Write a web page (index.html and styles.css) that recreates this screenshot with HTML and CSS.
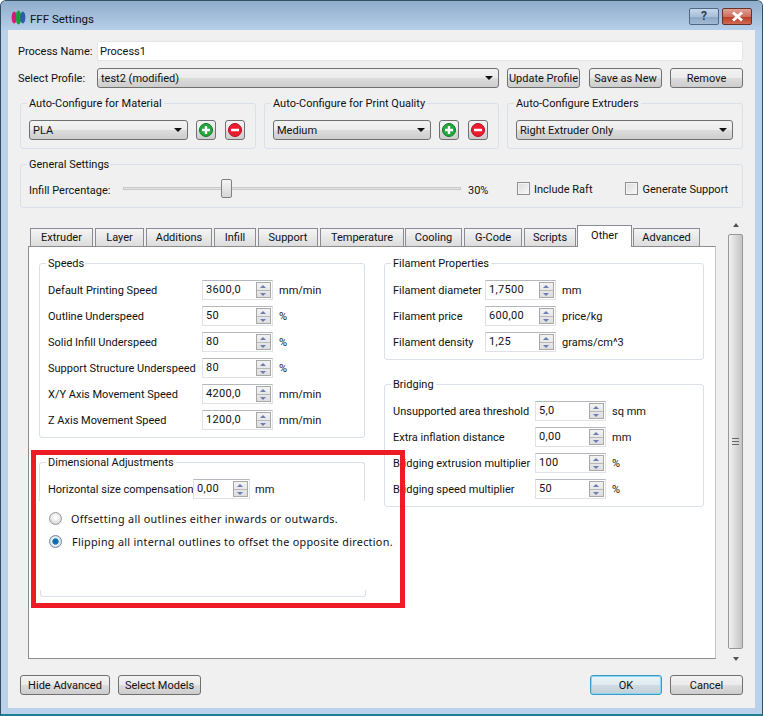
FILE: index.html
```html
<!DOCTYPE html>
<html lang="en">
<head>
  <meta charset="UTF-8" />
  <title>FFF Settings</title>
  <link rel="stylesheet" href="styles.css">
</head>
<body>
  <div class="window">
    <div class="titlebar">
      <svg class="app-icon" width="15" height="15" viewBox="0 0 15 15">
        <ellipse cx="3.2" cy="7.5" rx="2.6" ry="6" fill="#d81b78"/>
        <ellipse cx="7.5" cy="7.5" rx="2.8" ry="7" fill="#1f9a3c"/>
        <ellipse cx="11.8" cy="7.5" rx="2.6" ry="6" fill="#2a5fa8"/>
      </svg>
      <span class="title">FFF Settings</span>
      <div class="title-btn help">?</div>
      <div class="title-btn close">
        <svg width="13" height="11" viewBox="0 0 13 11"><path d="M2 1.5 L11 9.5 M11 1.5 L2 9.5" stroke="#fff" stroke-width="3" fill="none"/></svg>
      </div>
    </div>

    <div class="panel">
      <div class="row">
        <label class="row-label">Process Name:</label>
        <div class="textbox">Process1</div>
      </div>
      <div class="row row-profile">
        <label class="row-label">Select Profile:</label>
        <div class="combo combo-profile">test2 (modified)<i class="arrow"></i></div>
        <button class="btn btn-update">Update Profile</button>
        <button class="btn btn-save">Save as New</button>
        <button class="btn btn-remove">Remove</button>
      </div>

      <div class="auto-groups">
        <fieldset class="group">
          <legend>Auto-Configure for Material</legend>
          <div class="auto-row">
            <div class="combo combo-grow">PLA<i class="arrow"></i></div>
            <button class="btn icon-btn"><svg width="16" height="16" viewBox="0 0 16 16"><circle cx="8" cy="8" r="6.5" fill="#22a83c" stroke="#137a28"/><path d="M8 4 V12 M4 8 H12" stroke="#fff" stroke-width="2.4"/></svg></button>
            <button class="btn icon-btn"><svg width="16" height="16" viewBox="0 0 16 16"><circle cx="8" cy="8" r="6.5" fill="#ec1c2e" stroke="#b01020"/><path d="M4 8 H12" stroke="#fff" stroke-width="2.6"/></svg></button>
          </div>
        </fieldset>
        <fieldset class="group">
          <legend>Auto-Configure for Print Quality</legend>
          <div class="auto-row">
            <div class="combo combo-grow">Medium<i class="arrow"></i></div>
            <button class="btn icon-btn"><svg width="16" height="16" viewBox="0 0 16 16"><circle cx="8" cy="8" r="6.5" fill="#22a83c" stroke="#137a28"/><path d="M8 4 V12 M4 8 H12" stroke="#fff" stroke-width="2.4"/></svg></button>
            <button class="btn icon-btn"><svg width="16" height="16" viewBox="0 0 16 16"><circle cx="8" cy="8" r="6.5" fill="#ec1c2e" stroke="#b01020"/><path d="M4 8 H12" stroke="#fff" stroke-width="2.6"/></svg></button>
          </div>
        </fieldset>
        <fieldset class="group">
          <legend>Auto-Configure Extruders</legend>
          <div class="auto-row auto-row-wide">
            <div class="combo combo-grow">Right Extruder Only<i class="arrow"></i></div>
          </div>
        </fieldset>
      </div>

      <fieldset class="group general">
        <legend>General Settings</legend>
        <div class="general-row">
          <span class="infill-label">Infill Percentage:</span>
          <div class="slider"><div class="slider-handle"></div></div>
          <span class="infill-value">30%</span>
          <span class="check check-raft"></span><span class="check-text">Include Raft</span>
          <span class="check check-support"></span><span class="check-text">Generate Support</span>
        </div>
      </fieldset>

      <div class="tab-area">
        <div class="tab-widget">
          <div class="tabs">
            <div class="tab t-extruder">Extruder</div>
            <div class="tab t-layer">Layer</div>
            <div class="tab t-additions">Additions</div>
            <div class="tab t-infill">Infill</div>
            <div class="tab t-support">Support</div>
            <div class="tab t-temperature">Temperature</div>
            <div class="tab t-cooling">Cooling</div>
            <div class="tab t-gcode">G-Code</div>
            <div class="tab t-scripts">Scripts</div>
            <div class="tab tab-active t-other">Other</div>
            <div class="tab t-advanced">Advanced</div>
          </div>
          <div class="pane">
            <div class="col col-left">
              <fieldset class="group tab-group speeds">
                <legend>Speeds</legend>
                <div class="field"><span>Default Printing Speed</span><div class="spin">3600,0<b class="spin-btns"><i></i><i></i></b></div><span>mm/min</span></div>
                <div class="field"><span>Outline Underspeed</span><div class="spin">50<b class="spin-btns"><i></i><i></i></b></div><span>%</span></div>
                <div class="field"><span>Solid Infill Underspeed</span><div class="spin">80<b class="spin-btns"><i></i><i></i></b></div><span>%</span></div>
                <div class="field"><span>Support Structure Underspeed</span><div class="spin">80<b class="spin-btns"><i></i><i></i></b></div><span>%</span></div>
                <div class="field"><span>X/Y Axis Movement Speed</span><div class="spin">4200,0<b class="spin-btns"><i></i><i></i></b></div><span>mm/min</span></div>
                <div class="field"><span>Z Axis Movement Speed</span><div class="spin">1200,0<b class="spin-btns"><i></i><i></i></b></div><span>mm/min</span></div>
              </fieldset>
              <fieldset class="group tab-group dimensional">
                <legend>Dimensional Adjustments</legend>
                <div class="field"><span>Horizontal size compensation</span><div class="spin">0,00<b class="spin-btns"><i></i><i></i></b></div><span>mm</span></div>
              </fieldset>
              <div class="radio-row radio-first"><span class="radio"></span><span class="radio-text offset-text">Offsetting all outlines either inwards or outwards.</span></div>
              <div class="radio-row"><span class="radio radio-on"></span><span class="radio-text flip-text">Flipping all internal outlines to offset the opposite direction.</span></div>
              <div class="group-bottom"></div>
            </div>
            <div class="col col-right">
              <fieldset class="group tab-group filament">
                <legend>Filament Properties</legend>
                <div class="field"><span>Filament diameter</span><div class="spin">1,7500<b class="spin-btns"><i></i><i></i></b></div><span>mm</span></div>
                <div class="field"><span>Filament price</span><div class="spin">600,00<b class="spin-btns"><i></i><i></i></b></div><span>price/kg</span></div>
                <div class="field"><span>Filament density</span><div class="spin">1,25<b class="spin-btns"><i></i><i></i></b></div><span>grams/cm^3</span></div>
              </fieldset>
              <fieldset class="group tab-group bridging">
                <legend>Bridging</legend>
                <div class="field"><span>Unsupported area threshold</span><div class="spin">5,0<b class="spin-btns"><i></i><i></i></b></div><span>sq mm</span></div>
                <div class="field"><span>Extra inflation distance</span><div class="spin">0,00<b class="spin-btns"><i></i><i></i></b></div><span>mm</span></div>
                <div class="field"><span>Bridging extrusion multiplier</span><div class="spin">100<b class="spin-btns"><i></i><i></i></b></div><span>%</span></div>
                <div class="field"><span>Bridging speed multiplier</span><div class="spin">50<b class="spin-btns"><i></i><i></i></b></div><span>%</span></div>
              </fieldset>
            </div>
            <div class="highlight"></div>
          </div>
        </div>
        <div class="scrollbar">
          <i class="scroll-up"></i>
          <div class="scroll-thumb"><span class="grip"></span></div>
          <i class="scroll-down"></i>
        </div>
      </div>

      <div class="footer">
        <button class="btn btn-hide">Hide Advanced</button>
        <button class="btn btn-models">Select Models</button>
        <div class="footer-space"></div>
        <button class="btn btn-ok">OK</button>
        <button class="btn btn-cancel">Cancel</button>
      </div>
    </div>
  </div>
</body>
</html>
```

FILE: styles.css
```css
* {
  box-sizing: border-box;
}

body {
  margin: 0;
  background: #fff;
  font-family: Roboto, "Noto Sans", sans-serif;
  font-size: 11px;
  color: #111;
  white-space: nowrap;
}

.window {
  width: 763px;
  height: 716px;
  display: flex;
  flex-direction: column;
  padding: 0 7px 6px;
  border: 1px solid #33505f;
  border-bottom: 2px solid #1d7f95;
  border-radius: 6px 6px 0 0;
  background: #b9d1ea;
  overflow: hidden;
}

/* Title bar */
.titlebar {
  height: 29px;
  margin: 0 -7px;
  padding: 0 3px 0 3px;
  display: flex;
  align-items: center;
  background: linear-gradient(#8fadcc, #b6cfe9);
}

.app-icon {
  margin-left: 7px;
  margin-top: 3px;
}

.title {
  margin-left: 4px;
  margin-top: 6px;
  font-size: 11.5px;
  flex: 1;
}

.title-btn {
  height: 17px;
  margin-top: 1px;
  display: flex;
  align-items: center;
  justify-content: center;
  border: 1px solid #51677f;
  border-radius: 2px;
}

.help {
  width: 30px;
  margin-right: 3px;
  color: #2b3f55;
  font-weight: bold;
  font-size: 12px;
  background: linear-gradient(#c4d6ea 0%, #a9c0da 50%, #8aa6c5 52%, #a2bad5 100%);
}

.close {
  width: 30px;
  margin-right: 7px;
  border-color: #6d3027;
  background: linear-gradient(#e0a196 0%, #cf6f5e 50%, #b93a26 52%, #cf6b55 100%);
}

/* Main panel */
.panel {
  flex: 1;
  padding: 11px 12px 13px 10px;
  display: flex;
  flex-direction: column;
  background: #f0f0f0;
}

.row {
  height: 20px;
  display: flex;
  align-items: center;
}

.row-profile {
  margin-top: 7px;
}

.row-label {
  width: 79px;
}

.textbox {
  flex: 1;
  height: 20px;
  padding: 0 2px;
  line-height: 19px;
  background: #fff;
  border: 1px solid #e2e6ea;
  border-radius: 2px;
}

.combo {
  position: relative;
  height: 20px;
  padding: 0 3px;
  line-height: 20px;
  border: 1px solid #707070;
  border-radius: 3px;
  background: linear-gradient(#f3f3f3 0%, #ebebeb 48%, #dcdcdc 52%, #cdcdcd 100%);
}

.combo-profile {
  width: 402px;
}

.combo-grow {
  flex: 1;
}

.arrow {
  position: absolute;
  right: 5px;
  top: 7px;
  border-left: 4px solid transparent;
  border-right: 4px solid transparent;
  border-top: 4px solid #111;
}

.btn {
  height: 20px;
  padding: 1px 0 0;
  font-family: inherit;
  font-size: 11px;
  color: #111;
  border: 1px solid #707070;
  border-radius: 3px;
  background: linear-gradient(#f3f3f3 0%, #ebebeb 48%, #dcdcdc 52%, #cdcdcd 100%);
}

.btn-update {
  width: 73px;
  margin-left: 8px;
}

.btn-save {
  width: 73px;
  margin-left: 9px;
}

.btn-remove {
  width: 73px;
  margin-left: 8px;
}

.icon-btn {
  width: 20px;
  margin-left: 8px;
  padding: 0;
  display: flex;
  align-items: center;
  justify-content: center;
}

.icon-btn + .icon-btn {
  margin-left: 9px;
}

/* Group boxes */
fieldset.group {
  margin: 0;
  padding: 0;
  min-width: 0;
  border: 1px solid #d9e0e8;
  border-radius: 3px;
}

.group legend {
  margin-left: 6px;
  padding: 0 2px;
  height: 14px;
  line-height: 16px;
}

.auto-groups {
  margin: 8px 0 0 2px;
  display: grid;
  grid-template-columns: 236px 235px 236px;
  gap: 8px;
}

.auto-groups .group {
  height: 53px;
}

.auto-row {
  margin: 10px 10px 0 8px;
  display: flex;
}

.auto-row-wide {
  margin-right: 9px;
}

.general {
  margin: 8px 0 0 2px !important;
  height: 51px;
}

.general-row {
  margin: 9px 0 0 8px;
  height: 18px;
  display: flex;
  align-items: center;
}

.infill-label {
  width: 94px;
  margin-top: 3px;
}

.slider {
  position: relative;
  width: 338px;
  height: 3px;
  margin-top: -1px;
  background: #e3e3e3;
  border: 1px solid #c9c9c9;
}

.slider-handle {
  position: absolute;
  left: 97px;
  top: -9px;
  width: 11px;
  height: 19px;
  border: 1px solid #808080;
  border-radius: 2px;
  background: linear-gradient(#f4f4f4, #d8d8d8);
}

.infill-value {
  width: 49px;
  margin-left: 7px;
  margin-top: 3px;
}

.check {
  width: 13px;
  height: 13px;
  flex: none;
  border: 1px solid #8e8f8f;
  background: linear-gradient(135deg, #dcdcdc, #f8f8f8);
  box-shadow: inset 0 0 0 1px #f4f4f4;
}

.check-text {
  margin-left: 4px;
}

.check-raft {
  margin-top: -2px;
}

.check-support {
  margin-left: 32px;
  margin-top: -2px;
}

.check-support + .check-text {
  margin-left: 5px;
}

/* Tabs */
.tab-area {
  flex: 1;
  margin-top: 8px;
  display: flex;
}

.tab-widget {
  width: 689px;
  margin-left: 10px;
  padding-top: 9px;
  display: flex;
  flex-direction: column;
}

.tabs {
  height: 21px;
  padding-left: 2px;
  display: flex;
  align-items: flex-end;
  position: relative;
  z-index: 1;
}

.tab {
  height: 18px;
  margin-right: 2px;
  line-height: 17px;
  text-align: center;
  border: 1px solid #898c95;
  border-bottom: none;
  background: linear-gradient(#f5f5f5, #dcdcdc);
}

.t-extruder { width: 63px; }
.t-layer { width: 49px; }
.t-additions { width: 66px; }
.t-infill { width: 42px; }
.t-support { width: 60px; }
.t-temperature { width: 84px; margin-right: 1px; }
.t-cooling { width: 57px; }
.t-gcode { width: 58px; }
.t-scripts { width: 52px; margin-right: 1px; }
.t-other { width: 55px; margin-right: 1px; }
.t-advanced { width: 67px; }

.tab-active {
  height: 22px;
  margin-bottom: -1px;
  line-height: 19px;
  background: #fff;
}

.pane {
  position: relative;
  height: 413px;
  padding: 9px 10px 0 10px;
  display: flex;
  gap: 19px;
  background: #fff;
  border: 1px solid #8d8d8d;
  border-right-color: #c4c4c4;
}

.col-left {
  width: 326px;
}

.col-right {
  width: 320px;
}

.tab-group {
  padding-bottom: 7px !important;
}

.field {
  height: 20px;
  margin-top: 6px;
  display: flex;
  align-items: center;
}

.group legend + .field {
  margin-top: 10px;
}

.speeds .field span:first-child { width: 154px; margin-left: 8px; }
.filament .field span:first-child { width: 92px; margin-left: 8px; }
.bridging .field span:first-child { width: 142px; margin-left: 8px; }
.dimensional .field span:first-child { width: 145px; margin-left: 8px; }

.spin {
  position: relative;
  width: 71px;
  height: 20px;
  margin-right: 6px;
  padding-left: 3px;
  line-height: 18px;
  border: 1px solid #dfe3e8;
  border-top-color: #b5b9bf;
  letter-spacing: 0.3px;
}

.dimensional .spin {
  width: 57px;
  margin-right: 5px;
}

.spin-btns {
  position: absolute;
  right: 1px;
  top: 1px;
  width: 15px;
  height: 16px;
  display: flex;
  flex-direction: column;
  border: 1px solid #a8a8a8;
  background: linear-gradient(#f2f2f2, #dedede);
}

.spin-btns i {
  flex: 1;
  position: relative;
}

.spin-btns i:first-child {
  border-bottom: 1px solid #b8b8b8;
}

.spin-btns i::after {
  content: "";
  position: absolute;
  left: 3px;
  top: 2px;
  border-left: 3.5px solid transparent;
  border-right: 3.5px solid transparent;
}

.spin-btns i:first-child::after {
  border-bottom: 3px solid #6b7db3;
}

.spin-btns i:last-child::after {
  border-top: 3px solid #6b7db3;
}

.speeds {
  height: 182px;
}

.dimensional {
  height: 46px;
  margin-top: 17px !important;
  border-bottom: none !important;
  border-radius: 3px 3px 0 0 !important;
}

.radio-row {
  height: 16px;
  margin-top: 7px;
  padding-left: 10px;
  display: flex;
  align-items: center;
}

.radio-first {
  margin-top: 9px;
}

.radio {
  width: 13px;
  height: 13px;
  flex: none;
  border-radius: 50%;
  border: 1px solid #9a9a9a;
  background: radial-gradient(circle at 50% 40%, #fff 10%, #e8e8e8 50%, #bdbdbd 100%);
}

.radio-on {
  border-color: #6f8aa6;
  background: radial-gradient(circle, #0f5f9c 0%, #1b78b8 36%, #e8eef4 46%, #dfe8f0 60%, #a9b7c4 100%);
}

.radio-text {
  margin-left: 9px;
  font-family: "Noto Sans", sans-serif;
  letter-spacing: 0.3px;
}

.offset-text {
  font-size: 10.8px;
}

.flip-text {
  margin-left: 10px;
  font-size: 10.8px;
  letter-spacing: 0.28px;
}

.group-bottom {
  width: 326px;
  height: 7px;
  margin: 41px 0 0 1px;
  border: 1px solid #d9e0e8;
  border-top: none;
  border-radius: 0 0 3px 3px;
}

.filament {
  height: 104px;
}

.bridging {
  height: 130px;
  margin-top: 17px !important;
}

.highlight {
  position: absolute;
  left: 2px;
  top: 203px;
  width: 374px;
  height: 158px;
  border: 5px solid #ed1c24;
}

/* Scrollbar */
.scrollbar {
  width: 15px;
  height: 451px;
  margin-left: 12px;
  display: flex;
  flex-direction: column;
  align-items: center;
}

.scroll-up {
  margin-top: 7px;
  border-left: 3.5px solid transparent;
  border-right: 3.5px solid transparent;
  border-bottom: 4px solid #555;
}

.scroll-down {
  margin-top: 8px;
  border-left: 3.5px solid transparent;
  border-right: 3.5px solid transparent;
  border-top: 4px solid #555;
}

.scroll-thumb {
  width: 15px;
  height: 415px;
  margin-top: 7px;
  display: flex;
  align-items: center;
  justify-content: center;
  border: 1px solid #979797;
  border-radius: 2px;
  background: linear-gradient(90deg, #f1f1f1, #d8d8d8 55%, #c4c4c4);
}

.grip {
  width: 7px;
  height: 7px;
  border-top: 1px solid #666;
  border-bottom: 1px solid #666;
  background: linear-gradient(transparent 40%, #666 40%, #666 60%, transparent 60%);
}

/* Bottom buttons */
.footer {
  margin-top: 8px;
  padding-left: 2px;
  display: flex;
}

.btn-hide {
  width: 90px;
}

.btn-models {
  width: 83px;
  margin-left: 8px;
}

.footer-space {
  flex: 1;
}

.btn-ok {
  width: 72px;
  border: 1px solid #3a9ac9;
  box-shadow: inset 0 0 0 1px #8ad6f2;
  background: linear-gradient(#eaf5fa 0%, #dfeaf0 48%, #cfdbe2 52%, #c3d0d8 100%);
}

.btn-cancel {
  width: 73px;
  margin-left: 8px;
}
```
